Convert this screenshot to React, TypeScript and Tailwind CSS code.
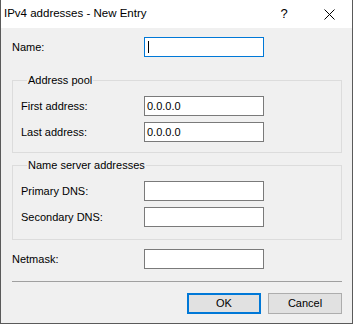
import type { ReactNode } from "react";

const font = { fontFamily: '"Segoe UI", "Liberation Sans", Arial, sans-serif' };

function Field({ value, focused }: { value?: string; focused?: boolean }) {
  return (
    <div
      className={`flex h-[20px] w-[120px] items-center bg-white pl-[2px] text-[11px] text-black ${
        focused ? "border border-[#0078d7]" : "border border-[#7a7a7a]"
      }`}
    >
      {focused && <span className="ml-[1px] h-[12px] w-px bg-black" />}
      {value}
    </div>
  );
}

function Row({ label, labelWidth, children }: { label: string; labelWidth: string; children: ReactNode }) {
  return (
    <div className="flex items-center">
      <span className={`${labelWidth} text-[11px] text-black`}>{label}</span>
      {children}
    </div>
  );
}

function Group({ title, bottomPad, children }: { title: string; bottomPad: string; children: ReactNode }) {
  return (
    <fieldset className={`ml-[11px] mr-[10px] border border-[#dcdcdc] pl-[8px] pt-[9px] ${bottomPad}`}>
      <legend className="ml-[6px] px-[1px] text-[11px] leading-[13px] text-black">{title}</legend>
      <div className="flex flex-col gap-[6px]">{children}</div>
    </fieldset>
  );
}

export default function App() {
  return (
    <div
      className="flex h-[324px] w-[353px] flex-col border-x border-b border-[#5a5a5a] bg-[#f0f0f0]"
      style={font}
    >
      {/* title bar */}
      <div className="flex h-[28px] items-center bg-white">
        <span className="ml-[3px] flex-1 text-[11.5px] text-black">IPv4 addresses - New Entry</span>
        <div className="flex h-full w-[44px] items-center justify-center text-[13px] text-black">?</div>
        <div className="flex h-full w-[46px] items-center justify-center">
          <svg width="11" height="11" viewBox="0 0 11 11" fill="none" stroke="#000" strokeWidth="1">
            <path d="M0.5 0.5 L10.5 10.5 M10.5 0.5 L0.5 10.5" />
          </svg>
        </div>
      </div>

      <div className="flex flex-col pt-[9px]">
        <div className="pl-[11px]">
          <Row label="Name:" labelWidth="w-[132px]">
            <Field focused />
          </Row>
        </div>

        <div className="mt-[17px]">
          <Group title="Address pool" bottomPad="pb-[10px]">
            <Row label="First address:" labelWidth="w-[123px]">
              <Field value="0.0.0.0" />
            </Row>
            <Row label="Last address:" labelWidth="w-[123px]">
              <Field value="0.0.0.0" />
            </Row>
          </Group>
        </div>

        <div className="mt-[6px]">
          <Group title="Name server addresses" bottomPad="pb-[12px]">
            <Row label="Primary DNS:" labelWidth="w-[123px]">
              <Field />
            </Row>
            <Row label="Secondary DNS:" labelWidth="w-[123px]">
              <Field />
            </Row>
          </Group>
        </div>

        <div className="mt-[9px] pl-[11px]">
          <Row label="Netmask:" labelWidth="w-[132px]">
            <Field />
          </Row>
        </div>

        <div className="ml-[11px] mr-[10px] mt-[12px] h-px bg-[#a0a0a0]" />

        <div className="mr-[10px] mt-[11px] flex justify-end gap-[7px]">
          <button className="h-[21px] w-[74px] border-2 border-[#0078d7] bg-[#e1e1e1] text-[11px] text-black">
            OK
          </button>
          <button className="h-[21px] w-[74px] border border-[#adadad] bg-[#e1e1e1] text-[11px] text-black">
            Cancel
          </button>
        </div>
      </div>
    </div>
  );
}
